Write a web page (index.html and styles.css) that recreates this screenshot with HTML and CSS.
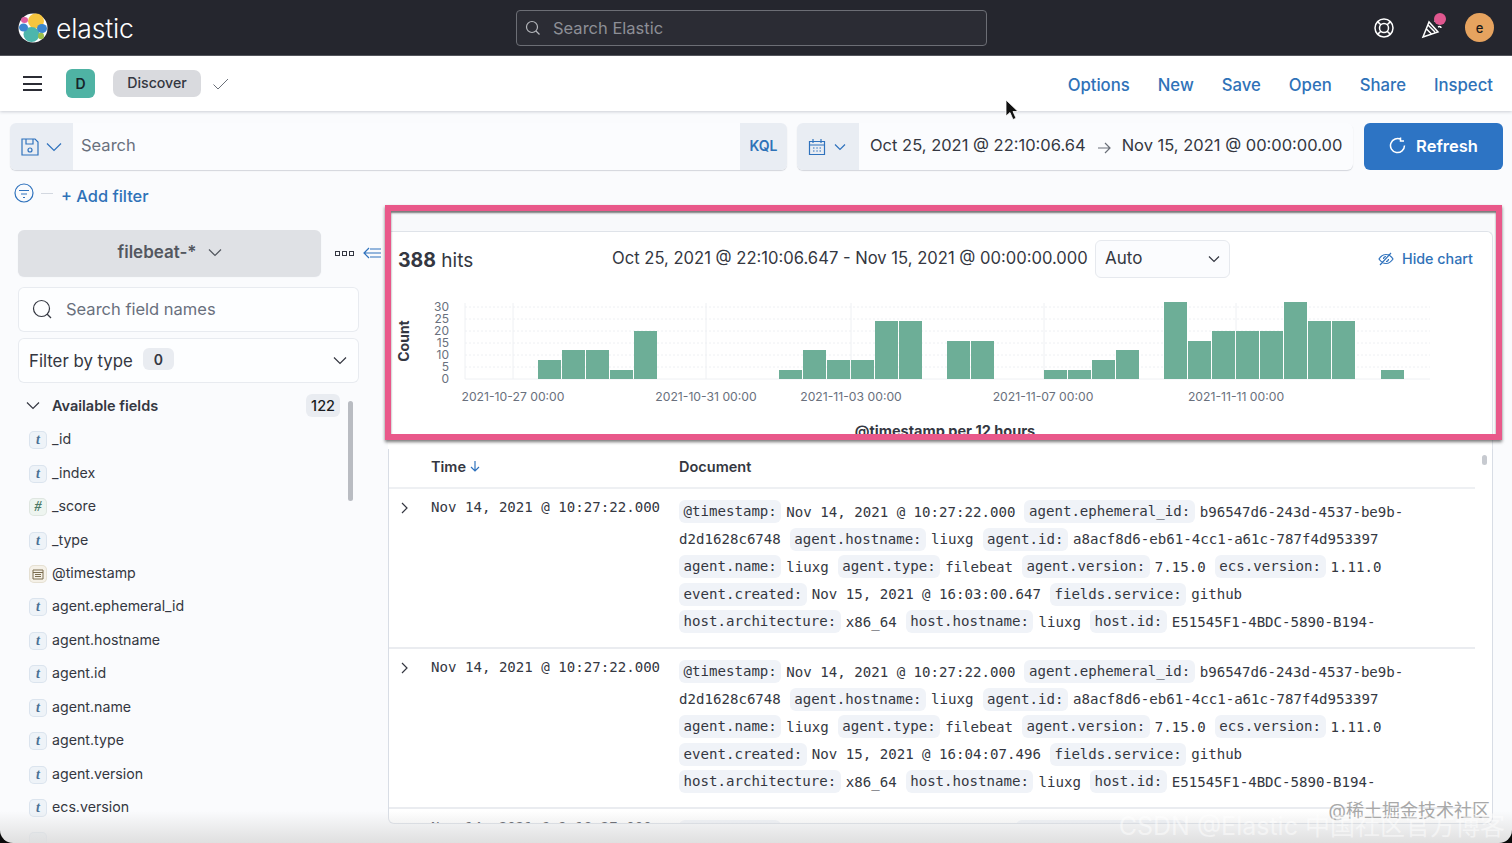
FILE: index.html
```html
<!DOCTYPE html>
<html lang="en">
<head>
<meta charset="utf-8">
<title>Discover - Elastic</title>
<link rel="stylesheet" href="styles.css">
</head>
<body>
<div class="page">
  <header class="topbar">
    <div class="brand">
      <svg class="logo" width="32" height="32" viewBox="0 0 32 32">
        <circle class="lg-w" cx="16" cy="16" r="14.5"/>
        <ellipse class="lg-y" cx="19" cy="9" rx="8" ry="7.5"/>
        <ellipse class="lg-t" cx="14.5" cy="22.5" rx="8" ry="7.5"/>
        <ellipse class="lg-p" cx="7.5" cy="8" rx="3.5" ry="3"/>
        <ellipse class="lg-b" cx="6.5" cy="15.5" rx="4.5" ry="4"/>
        <ellipse class="lg-b" cx="25" cy="16.5" rx="5" ry="4.5"/>
        <ellipse class="lg-g" cx="24" cy="24" rx="3" ry="3.2"/>
      </svg>
      <span class="wordmark">elastic</span>
    </div>
    <div class="global-search">
      <svg class="ico-s" width="16" height="16" viewBox="0 0 16 16"><circle cx="7" cy="7" r="5.5"/><path d="M11 11l3.5 3.5"/></svg>
      <span>Search Elastic</span>
    </div>
    <div class="top-icons">
      <svg class="ico-w" width="22" height="22" viewBox="0 0 22 22"><circle cx="11" cy="11" r="9"/><circle cx="11" cy="11" r="4.5"/><path d="M4.600 4.600l3.200 3.200M17.400 4.600l-3.200 3.200M4.600 17.400l3.200-3.200M17.400 17.400l-3.200-3.200"/></svg>
      <span class="popper">
        <svg class="ico-w" width="22" height="22" viewBox="0 0 22 22"><path d="M8 5L2 20l15-5zM5.500 12l5 5M7 8l7 7M14 5l1-3M17 10c2-1 3 0 3 1"/></svg>
        <i class="dot"></i>
      </span>
      <span class="avatar">e</span>
    </div>
  </header>

  <nav class="subnav">
    <div class="crumbs">
      <span class="burger"><i></i><i></i><i></i></span>
      <span class="app-badge">D</span>
      <span class="crumb-chip">Discover</span>
      <svg class="ico-d" width="18" height="14" viewBox="0 0 18 14"><path d="M1.500 7.500L6 12 16 2"/></svg>
    </div>
    <div class="nav-links">
      <a>Options</a><a>New</a><a>Save</a><a>Open</a><a>Share</a><a>Inspect</a>
    </div>
  </nav>

  <section class="querybar">
    <div class="searchbox">
      <span class="addon addon-save">
        <svg class="ico-b" width="20" height="20" viewBox="0 0 20 20"><path d="M2 2h13l3 3v13H2zM6 2v5h7V2M8 13a2 2 0 1 0 4 0a2 2 0 1 0-4 0" /></svg>
        <svg class="ico-b" width="16" height="10" viewBox="0 0 16 10"><path d="M1 1.500l7 7 7-7"/></svg>
      </span>
      <span class="search-text">Search</span>
      <span class="addon addon-kql">KQL</span>
    </div>
    <div class="datebox">
      <span class="addon addon-cal">
        <svg class="ico-b" width="18" height="18" viewBox="0 0 18 18"><path d="M1.500 3.500h15v13h-15zM1.500 7h15M5 1v4M13 1v4M5 10h1.500M8.300 10h1.500M11.500 10h1.500M5 13h1.500M8.300 13h1.500M11.500 13h1.500"/></svg>
        <svg class="ico-b" width="12" height="8" viewBox="0 0 12 8"><path d="M1 1.500l5 5 5-5"/></svg>
      </span>
      <span class="date-from">Oct 25, 2021 @ 22:10:06.64</span>
      <svg class="ico-g" width="14" height="12" viewBox="0 0 14 12"><path d="M1 6h12M8 1l5 5-5 5"/></svg>
      <span class="date-to">Nov 15, 2021 @ 00:00:00.00</span>
    </div>
    <button class="refresh">
      <svg class="ico-w" width="17" height="17" viewBox="0 0 17 17"><path d="M12 2.500A7 7 0 1 0 15.500 8.500M11.500 .5v3.500H15"/></svg>
      <span>Refresh</span>
    </button>
  </section>

  <section class="filterrow">
    <svg class="ico-b" width="20" height="20" viewBox="0 0 20 20"><circle cx="10" cy="10" r="9"/><path d="M5 7.500h10M7 11h6M9 14.500h2"/></svg>
    <i class="dash"></i>
    <a class="add-filter">+ Add filter</a>
  </section>

  <main class="workspace">
    <aside class="sidebar">
      <div class="index-row">
        <div class="index-btn"><span>filebeat-*</span>
          <svg class="ico-d" width="14" height="9" viewBox="0 0 14 9"><path d="M1 1.500l6 6 6-6"/></svg>
        </div>
        <span class="dots"><i></i><i></i><i></i></span>
        <svg class="ico-b collapse" width="18" height="14" viewBox="0 0 18 14"><path d="M6 2L1 7l5 5M1 7h17M7 3h11M7 11h11"/></svg>
      </div>
      <div class="field-search">
        <svg class="ico-d" width="20" height="20" viewBox="0 0 20 20"><circle cx="9.500" cy="9.500" r="8"/><path d="M15 15l4 4"/></svg>
        <span>Search field names</span>
      </div>
      <div class="type-filter">
        <span class="type-label">Filter by type</span>
        <span class="count-chip">0</span>
        <svg class="ico-d type-chev" width="14" height="9" viewBox="0 0 14 9"><path d="M1 1.500l6 6 6-6"/></svg>
      </div>
      <div class="avail-head">
        <svg class="ico-d" width="14" height="9" viewBox="0 0 14 9"><path d="M1 1.500l6 6 6-6"/></svg>
        <strong>Available fields</strong>
        <span class="avail-count">122</span>
      </div>
      <i class="side-scroll"></i>
      <ul class="fields">
        <li><span class="ft">t</span>_id</li>
        <li><span class="ft">t</span>_index</li>
        <li><span class="ft ft-num">#</span>_score</li>
        <li><span class="ft">t</span>_type</li>
        <li><span class="ft ft-date"><svg width="12" height="12" viewBox="0 0 12 12"><path d="M1 2h10v9H1zM1 4.500h10M3 6.500h6M3 8.500h6"/></svg></span>@timestamp</li>
        <li><span class="ft">t</span>agent.ephemeral_id</li>
        <li><span class="ft">t</span>agent.hostname</li>
        <li><span class="ft">t</span>agent.id</li>
        <li><span class="ft">t</span>agent.name</li>
        <li><span class="ft">t</span>agent.type</li>
        <li><span class="ft">t</span>agent.version</li>
        <li><span class="ft">t</span>ecs.version</li>
        <li><span class="ft"></span></li>
      </ul>
    </aside>

    <div class="results">
      <div class="chart-wrap">
        <div class="chart-card">
          <div class="chart-head">
            <div class="hits"><strong>388</strong> hits</div>
            <div class="range">Oct 25, 2021 @ 22:10:06.647 - Nov 15, 2021 @ 00:00:00.000</div>
            <div class="interval"><span>Auto</span>
              <svg class="ico-d" width="12" height="8" viewBox="0 0 12 8"><path d="M1 1.500l5 5 5-5"/></svg>
            </div>
            <a class="hide-chart">
              <svg class="ico-b" width="16" height="16" viewBox="0 0 16 16"><path d="M1 8c2-3 4.500-4.500 7-4.500S13 5 15 8c-2 3-4.500 4.500-7 4.500S3 11 1 8zM2 14L13 2M5.500 8a2.500 2.500 0 0 1 2.500-2.500M10.500 8a2.500 2.500 0 0 1-2.500 2.500"/></svg>
              <span>Hide chart</span>
            </a>
          </div>
          <svg class="histogram" width="1104" height="160" viewBox="388 286 1104 160">
            <g class="grid">
              <path d="M465 307H1430M465 319H1430M465 331H1430M465 343H1430M465 355H1430M465 367H1430"/>
            </g>
            <g class="vgrid">
              <path d="M465 303V379M513 303V379M706 303V379M851 303V379M1044 303V379M1236 303V379M465 379H1430"/>
            </g>
            <g class="bars">
              <rect x="538" y="360" width="23" height="19"/><rect x="562" y="350" width="23" height="29"/><rect x="586" y="350" width="23" height="29"/><rect x="610" y="370" width="23" height="9"/><rect x="634" y="331" width="23" height="48"/>
              <rect x="779" y="370" width="23" height="9"/><rect x="803" y="350" width="23" height="29"/><rect x="827" y="360" width="23" height="19"/><rect x="851" y="360" width="23" height="19"/><rect x="875" y="321" width="23" height="58"/><rect x="899" y="321" width="23" height="58"/>
              <rect x="947" y="341" width="23" height="38"/><rect x="971" y="341" width="23" height="38"/>
              <rect x="1044" y="370" width="23" height="9"/><rect x="1068" y="370" width="23" height="9"/><rect x="1092" y="360" width="23" height="19"/><rect x="1116" y="350" width="23" height="29"/>
              <rect x="1164" y="302" width="23" height="77"/><rect x="1188" y="341" width="23" height="38"/><rect x="1212" y="331" width="23" height="48"/><rect x="1236" y="331" width="23" height="48"/><rect x="1260" y="331" width="23" height="48"/><rect x="1284" y="302" width="23" height="77"/><rect x="1308" y="321" width="23" height="58"/><rect x="1332" y="321" width="23" height="58"/>
              <rect x="1381" y="370" width="23" height="9"/>
            </g>
            <g class="yticks">
              <text x="449" y="311.500">30</text><text x="449" y="323.500">25</text><text x="449" y="335.500">20</text><text x="449" y="347.500">15</text><text x="449" y="359.500">10</text><text x="449" y="371.500">5</text><text x="449" y="383.500">0</text>
            </g>
            <g class="xticks">
              <text x="513" y="401">2021-10-27 00:00</text><text x="706" y="401">2021-10-31 00:00</text><text x="851" y="401">2021-11-03 00:00</text><text x="1043" y="401">2021-11-07 00:00</text><text x="1236" y="401">2021-11-11 00:00</text>
            </g>
            <text class="ytitle" transform="translate(405 341) rotate(-90)">Count</text>
            <text class="xtitle" x="945" y="436">@timestamp per 12 hours</text>
          </svg>
        </div>
      </div>

      <div class="table-card">
        <div class="table-scroll">
          <div class="thead">
            <div class="th-time">Time
              <svg class="ico-b" width="10" height="11" viewBox="0 0 10 11"><path d="M5 0v10M1 6l4 4 4-4"/></svg>
            </div>
            <div class="th-doc">Document</div>
          </div>

          <article class="row">
            <svg class="ico-d row-chev" width="7" height="12" viewBox="0 0 7 12"><path d="M1 1l5 5-5 5"/></svg>
            <div class="time">Nov 14, 2021 @ 10:27:22.000</div>
            <div class="doc">
              <div class="line"><b>@timestamp:</b><span>Nov 14, 2021 @ 10:27:22.000</span><b>agent.ephemeral_id:</b><span>b96547d6-243d-4537-be9b-</span></div>
              <div class="line"><span>d2d1628c6748</span><b>agent.hostname:</b><span>liuxg</span><b>agent.id:</b><span>a8acf8d6-eb61-4cc1-a61c-787f4d953397</span></div>
              <div class="line"><b>agent.name:</b><span>liuxg</span><b>agent.type:</b><span>filebeat</span><b>agent.version:</b><span>7.15.0</span><b>ecs.version:</b><span>1.11.0</span></div>
              <div class="line"><b>event.created:</b><span>Nov 15, 2021 @ 16:03:00.647</span><b>fields.service:</b><span>github</span></div>
              <div class="line"><b>host.architecture:</b><span>x86_64</span><b>host.hostname:</b><span>liuxg</span><b>host.id:</b><span>E51545F1-4BDC-5890-B194-</span></div>
            </div>
          </article>

          <article class="row">
            <svg class="ico-d row-chev" width="7" height="12" viewBox="0 0 7 12"><path d="M1 1l5 5-5 5"/></svg>
            <div class="time">Nov 14, 2021 @ 10:27:22.000</div>
            <div class="doc">
              <div class="line"><b>@timestamp:</b><span>Nov 14, 2021 @ 10:27:22.000</span><b>agent.ephemeral_id:</b><span>b96547d6-243d-4537-be9b-</span></div>
              <div class="line"><span>d2d1628c6748</span><b>agent.hostname:</b><span>liuxg</span><b>agent.id:</b><span>a8acf8d6-eb61-4cc1-a61c-787f4d953397</span></div>
              <div class="line"><b>agent.name:</b><span>liuxg</span><b>agent.type:</b><span>filebeat</span><b>agent.version:</b><span>7.15.0</span><b>ecs.version:</b><span>1.11.0</span></div>
              <div class="line"><b>event.created:</b><span>Nov 15, 2021 @ 16:04:07.496</span><b>fields.service:</b><span>github</span></div>
              <div class="line"><b>host.architecture:</b><span>x86_64</span><b>host.hostname:</b><span>liuxg</span><b>host.id:</b><span>E51545F1-4BDC-5890-B194-</span></div>
            </div>
          </article>

          <article class="row">
            <div class="time">Nov 14, 2021 @ 9:18:27.000</div>
            <div class="doc">
              <div class="line"><b>@timestamp:</b><span>Nov 14, 2021 @ 9:18:27.000</span><b>agent.ephemeral_id:</b><span>b96547d6-243d-4537-be9b-</span></div>
            </div>
          </article>
        </div>
        <i class="table-thumb"></i>
      </div>
    </div>
    <div class="highlight"></div>
  </main>

  <svg class="cursor" width="14" height="22" viewBox="0 0 14 22"><path d="M1 1v16l4-3.500 3 7 3-1.300-3-6.700h5z"/></svg>
  <div class="fade"></div>
  <div class="mark-juejin">@稀土掘金技术社区</div>
  <div class="mark-csdn">CSDN @Elastic 中国社区官方博客</div>
  <div class="frame"></div>
</div>
</body>
</html>
```

FILE: styles.css
```css
* { box-sizing: border-box; }
html, body { margin: 0; padding: 0; }
body { font-family: Inter, "Noto Sans CJK SC", sans-serif; color: #343741; }
svg { display: block; flex: none; }
.page { position: relative; width: 1512px; height: 843px; overflow: hidden; background: #fafbfd; }

.ico-s, .ico-w, .ico-d, .ico-b, .ico-g { fill: none; stroke-width: 1.2; }
.ico-s { stroke: #b5b7bc; }
.ico-w { stroke: #fff; stroke-width: 1.500; }
.ico-d { stroke: #343741; }
.ico-b { stroke: #2f72bd; }
.ico-g { stroke: #6a6f78; }

/* top bar */
.topbar { height: 56px; background: #25262e; display: grid; grid-template-columns: 516px 471px 1fr; align-items: center; border-bottom: 1px solid #55565c; }
.brand { display: flex; align-items: center; gap: 7px; padding-left: 17px; }
.lg-w { fill: #fff; }
.lg-y { fill: #f6c53f; }
.lg-t { fill: #4db6ac; }
.lg-p { fill: #dd5fa0; }
.lg-b { fill: #3b86cf; }
.lg-g { fill: #9bbf4b; }
.wordmark { color: #fff; font-size: 26.600px; font-weight: 300; letter-spacing: -.2px; line-height: 32px; }
.global-search { height: 36px; border: 1px solid #6c6e75; border-radius: 4px; background: #2b2c34; display: flex; align-items: center; gap: 12px; padding-left: 8px; color: #8d8f96; font-size: 16.500px; }
.top-icons { display: flex; align-items: center; justify-content: flex-end; padding-right: 18px; }
.popper { position: relative; margin-left: 26px; margin-right: 22px; }
.dot { position: absolute; left: 13px; top: -4px; width: 12px; height: 12px; border-radius: 50%; background: #e0578f; }
.avatar { width: 29px; height: 29px; border-radius: 50%; background: #e6a35f; color: #1a1a1a; display: flex; align-items: center; justify-content: center; font-size: 13px; font-weight: 500; }

/* sub nav */
.subnav { height: 55px; background: #fff; display: flex; align-items: center; justify-content: space-between; padding-right: 19px; box-shadow: 0 1px 3px rgba(70,80,100,.25); position: relative; }
.crumbs { display: flex; align-items: center; padding-left: 23px; }
.burger { display: flex; flex-direction: column; gap: 4.500px; width: 19px; }
.burger i { display: block; height: 2px; background: #2b2c34; }
.app-badge { margin-left: 24px; width: 29px; height: 29px; border-radius: 6px; background: #4fb3a4; display: flex; align-items: center; justify-content: center; font-size: 14px; font-weight: 600; color: #17242a; }
.crumb-chip { margin-left: 18px; height: 27px; width: 88px; border-radius: 7px; background: #d9dade; display: flex; align-items: center; justify-content: center; font-size: 14.200px; font-weight: 500; color: #343741; padding-bottom: 3px; }
.crumbs .ico-d { margin-left: 11px; stroke: #6a6f78; stroke-width: 1; }
.nav-links { display: flex; gap: 28px; font-size: 16.700px; font-weight: 500; color: #2f72b8; padding-top: 2px; }

/* query bar */
.querybar { display: flex; align-items: stretch; height: 47px; margin-top: 12px; padding-left: 10px; }
.searchbox, .datebox { display: flex; align-items: center; height: 47px; background: #fbfcfe; border-radius: 6px; box-shadow: 0 1px 1px rgba(60,70,90,.2); overflow: hidden; }
.searchbox { width: 777px; }
.datebox { width: 556px; margin-left: 10px; font-size: 16.500px; color: #343741; }
.addon { flex: none; height: 100%; background: #e9edf3; display: flex; align-items: center; }
.addon-save { width: 63px; padding-left: 10px; gap: 6px; }
.addon-cal { width: 62px; padding-left: 11px; gap: 8px; }
.addon-kql { width: 47px; justify-content: center; font-size: 14px; font-weight: 600; color: #2f72b8; padding-bottom: 2px; }
.search-text { flex: 1; padding: 0 0 3px 8px; font-size: 16.500px; color: #69707d; }
.date-from { margin-left: 11px; white-space: nowrap; padding-bottom: 3px; }
.datebox .ico-g { margin: 2px 11px 0; }
.date-to { white-space: nowrap; padding-bottom: 3px; }
.refresh { margin-left: 11px; width: 139px; height: 47px; padding: 0 0 2px; border: 0; border-radius: 6px; background: #2d74c4; color: #fff; font: 600 16.500px Inter, sans-serif; display: flex; align-items: center; justify-content: center; gap: 10px; }

/* filter row */
.filterrow { height: 42px; display: flex; align-items: center; padding-left: 14px; padding-bottom: 1px; }
.filterrow > svg { margin-top: 5px; }
.dash { width: 12px; height: 1px; background: #d3d8e0; margin: 5px 8px 0 7px; }
.add-filter { font-size: 16.400px; font-weight: 500; color: #2f72b8; margin-top: 10px; }

/* workspace */
.workspace { position: relative; display: grid; grid-template-columns: 388px 1105px; height: 631px; }
.sidebar { position: relative; padding: 18px 29px 0 18px; overflow: hidden; }
.index-row { position: relative; height: 46px; display: flex; align-items: center; width: 366px; }
.index-btn { width: 303px; height: 46px; border-radius: 6px; background: #dfe1e5; display: flex; align-items: center; justify-content: center; gap: 11px; font-size: 17px; font-weight: 600; color: #53575f; box-shadow: 0 1px 1px rgba(60,70,90,.15); padding-bottom: 2px; }
.index-btn .ico-d { stroke: #53575f; }
.dots { display: flex; gap: 2px; margin-left: 14px; }
.dots i { width: 5px; height: 5px; border: 1px solid #343741; }
.collapse { margin-left: 9px; }
.field-search, .type-filter { width: 341px; height: 45px; background: #fdfeff; border-radius: 6px; box-shadow: inset 0 0 0 1px #e8ebf0; display: flex; align-items: center; }
.field-search { margin-top: 11px; padding: 0 0 2px 14px; gap: 14px; font-size: 16.500px; color: #69707d; }
.type-filter { margin-top: 6px; padding-left: 11px; font-size: 16.800px; }
.count-chip { margin-left: 10px; padding: 0 11px; height: 22px; border-radius: 6px; background: #e9ecf1; font-size: 14px; font-weight: 600; display: flex; align-items: center; margin-top: -3px; }
.type-chev { margin-left: auto; margin-right: 12px; }
.avail-head { position: relative; width: 322px; height: 24px; margin-top: 10px; padding-left: 8px; display: flex; align-items: center; gap: 12px; font-size: 14.500px; }
.avail-head strong { font-weight: 600; }
.avail-count { margin-left: auto; padding: 0 5px; height: 23px; border-radius: 6px; background: #e9ecf1; display: flex; align-items: center; font-size: 14.500px; font-weight: 500; color: #1a1c21; }
.side-scroll { position: absolute; left: 348px; top: 189px; width: 5px; height: 100px; border-radius: 3px; background: #b9bcc2; }
.fields { list-style: none; margin: 5px 0 0; padding: 0 0 0 11px; }
.fields li { height: 33.450px; display: flex; align-items: center; gap: 5px; font-size: 14.200px; color: #343741; }
.ft { flex: none; width: 18px; height: 18px; margin-top: 3px; border-radius: 5px; background: #eef3f8; box-shadow: inset 0 0 0 1px #dbe4ee; display: flex; align-items: center; justify-content: center; font: italic 700 14px "Liberation Serif", serif; color: #4a7194; }
.ft-num { background: #eef5f0; box-shadow: inset 0 0 0 1px #dfe6e1; color: #4d7a67; }
.ft-date { background: #f5f1e8; box-shadow: inset 0 0 0 1px #e5e0d3; }
.ft-date svg { fill: none; stroke: #7b6d4f; stroke-width: 1; }

/* results */
.results { display: flex; flex-direction: column; height: 612px; }
.chart-wrap { height: 237px; padding-top: 19px; background: #f8f9fb; }
.chart-card { height: 218px; background: #fff; border-top: 1px solid #dfe3e9; border-right: 1px solid #dfe3e9; border-radius: 0 6px 0 0; overflow: hidden; }
.chart-head { height: 54px; display: flex; align-items: flex-start; padding-left: 10px; }
.hits { margin-top: 15px; width: 214px; font-size: 19px; line-height: 26px; }
.hits strong { font-size: 19.500px; font-weight: 700; }
.range { margin-top: 14px; width: 483px; font-size: 16.600px; line-height: 24px; white-space: nowrap; }
.interval { margin-top: 8px; width: 135px; height: 38px; border: 1px solid #e6e9ee; border-radius: 6px; background: #fbfcfe; display: flex; align-items: center; justify-content: space-between; padding: 0 9px 3px; font-size: 17px; }
.interval svg { margin-top: 3px; }
.hide-chart { margin: 18px 0 0 148px; display: flex; align-items: center; gap: 8px; font-size: 14.300px; font-weight: 500; color: #2f72b8; white-space: nowrap; }
.grid path { fill: none; stroke: #eef0f3; stroke-dasharray: 2 2; }
.vgrid path { fill: none; stroke: #eef0f3; }
.bars rect { fill: #6dae97; }
.yticks text { font: 400 12px Inter, sans-serif; fill: #69707d; text-anchor: end; transform: translateY(-1px); }
.xticks text { font: 400 12.200px Inter, sans-serif; fill: #69707d; text-anchor: middle; }
.ytitle { font: 700 14px Inter, sans-serif; fill: #343741; text-anchor: middle; dominant-baseline: middle; }
.xtitle { font: 700 14.500px Inter, sans-serif; fill: #343741; text-anchor: middle; }

.table-card { position: relative; height: 375px; background: #fff; border: 1px solid #d8dde5; border-top: 0; border-radius: 0 0 6px 6px; overflow: hidden; }
.table-scroll { width: 1086px; }
.table-thumb { position: absolute; right: 5px; top: 6px; width: 5px; height: 10px; border-radius: 3px; background: #c7cad0; }
.thead { height: 40px; padding-bottom: 3px; display: grid; grid-template-columns: 290px 1fr; align-items: center; border-bottom: 2px solid #eef0f3; font-size: 14.500px; font-weight: 600; }
.th-time { display: flex; align-items: center; gap: 4px; padding-left: 42px; }
.row { position: relative; height: 160px; display: grid; grid-template-columns: 290px 1fr; border-bottom: 2px solid #eaecf0; font: 400 14.100px "DejaVu Sans Mono", monospace; color: #343741; }
.row-chev { position: absolute; left: 12px; top: 13px; }
.time { padding: 8px 0 0 42px; white-space: nowrap; line-height: 20px; font-size: 14.100px; }
.doc { padding-top: 9px; }
.line { height: 27.500px; display: flex; align-items: center; white-space: nowrap; }
.line b { font-weight: 400; background: #f0f3f8; border-radius: 6px; height: 23px; line-height: 23px; padding: 0 4.500px; margin-right: 5px; }
.line span { margin-right: 9px; }

/* overlays */
.highlight { position: absolute; left: 385px; top: -7px; width: 1117px; height: 235px; border: 6px solid #e9588a; box-shadow: 0 2px 3px rgba(30,30,30,.6), inset 0 2px 2px rgba(30,30,30,.6); pointer-events: none; }
.cursor { position: absolute; left: 1005px; top: 99px; fill: #111; stroke: #fff; stroke-width: .8; }
.fade { position: absolute; left: 0; right: 0; bottom: 0; height: 32px; background: linear-gradient(to bottom, rgba(225,225,225,0), rgba(222,222,222,.95)); }
.mark-juejin { position: absolute; right: 22px; top: 796px; font-size: 18px; color: #a8a8a8; white-space: nowrap; }
.mark-csdn { position: absolute; right: 7px; top: 806px; font-size: 25px; color: rgba(255,255,255,.5); white-space: nowrap; }
.frame { position: absolute; inset: 0; border-radius: 0 0 13px 13px; box-shadow: 0 20px 0 0 #0a0a0a; pointer-events: none; }
```
